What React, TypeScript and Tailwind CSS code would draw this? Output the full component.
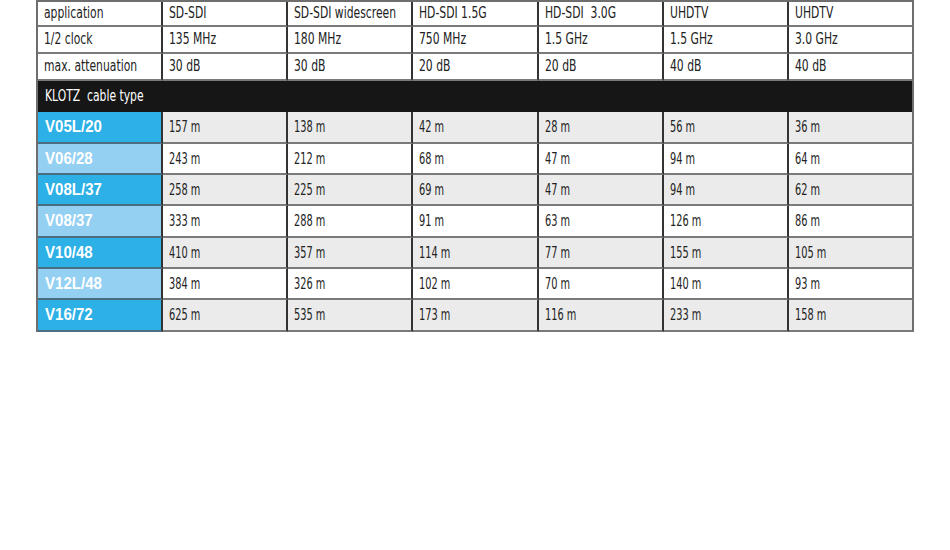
import React from "react";

const header: string[][] = [
  ["application", "SD-SDI", "SD-SDI widescreen", "HD-SDI 1.5G", "HD-SDI  3.0G", "UHDTV", "UHDTV"],
  ["1/2 clock", "135 MHz", "180 MHz", "750 MHz", "1.5 GHz", "1.5 GHz", "3.0 GHz"],
  ["max. attenuation", "30 dB", "30 dB", "20 dB", "20 dB", "40 dB", "40 dB"],
];

const data: string[][] = [
  ["V05L/20", "157 m", "138 m", "42 m", "28 m", "56 m", "36 m"],
  ["V06/28", "243 m", "212 m", "68 m", "47 m", "94 m", "64 m"],
  ["V08L/37", "258 m", "225 m", "69 m", "47 m", "94 m", "62 m"],
  ["V08/37", "333 m", "288 m", "91 m", "63 m", "126 m", "86 m"],
  ["V10/48", "410 m", "357 m", "114 m", "77 m", "155 m", "105 m"],
  ["V12L/48", "384 m", "326 m", "102 m", "70 m", "140 m", "93 m"],
  ["V16/72", "625 m", "535 m", "173 m", "116 m", "233 m", "158 m"],
];

const headerHeights = ["h-[25px]", "h-[27px]", "h-[27px]"];
const dataHeights = ["h-[32px]", "h-[31px]", "h-[31px]", "h-[32px]", "h-[31px]", "h-[31px]", "h-[32px]"];

const cond = '"DejaVu Sans Condensed", "Liberation Sans Narrow", sans-serif';
const bold = '"Liberation Sans", Arial, sans-serif';

export default function App() {
  return (
    <div className="w-[950px] h-[550px] bg-white text-[#222]" style={{ fontFamily: cond }}>
      <div className="ml-[36px] w-[878px] border-l-2 border-t-2 border-[#6e6e6e]">
        {header.map((row, i) => (
          <div key={i} className={`grid grid-cols-7 ${headerHeights[i]}`}>
            {row.map((c, j) => (
              <div
                key={j}
                className={`flex items-center pl-[6px] border-b-2 border-b-[#7a7a7a] border-r-2 ${
                  j === 6 ? "border-r-[#6e6e6e]" : "border-r-[#333]"
                } text-[15px] leading-none bg-white overflow-hidden`}
              >
                <span className="inline-block whitespace-pre origin-left scale-x-[0.8]">{c}</span>
              </div>
            ))}
          </div>
        ))}
        <div className="h-[31px] bg-[#161616] text-white text-[15px] leading-none flex items-center pl-[7px] border-r-2 border-r-[#6e6e6e]">
          <span className="inline-block whitespace-pre origin-left scale-x-[0.8]">{"KLOTZ  cable type"}</span>
        </div>
        {data.map((row, i) => {
          const odd = i % 2 === 0;
          return (
            <div key={i} className={`grid grid-cols-7 ${dataHeights[i]}`}>
              {row.map((c, j) =>
                j === 0 ? (
                  <div
                    key={j}
                    className={`flex items-center pl-[7px] border-b-2 border-b-[#4a6e80] border-r-2 border-r-[#333] text-white font-bold text-[16px] leading-none ${
                      odd ? "bg-[#2cb0e6]" : "bg-[#94d0f2]"
                    }`}
                    style={{ fontFamily: bold }}
                  >
                    <span className="inline-block whitespace-pre origin-left scale-x-[0.94]">{c}</span>
                  </div>
                ) : (
                  <div
                    key={j}
                    className={`flex items-center pl-[6px] border-b-2 border-b-[#7a7a7a] border-r-2 ${
                      j === 6 ? "border-r-[#6e6e6e]" : "border-r-[#333]"
                    } text-[16px] leading-none ${odd ? "bg-[#ebebeb]" : "bg-white"}`}
                  >
                    <span className="inline-block whitespace-pre origin-left scale-x-[0.68]">{c}</span>
                  </div>
                )
              )}
            </div>
          );
        })}
      </div>
    </div>
  );
}
